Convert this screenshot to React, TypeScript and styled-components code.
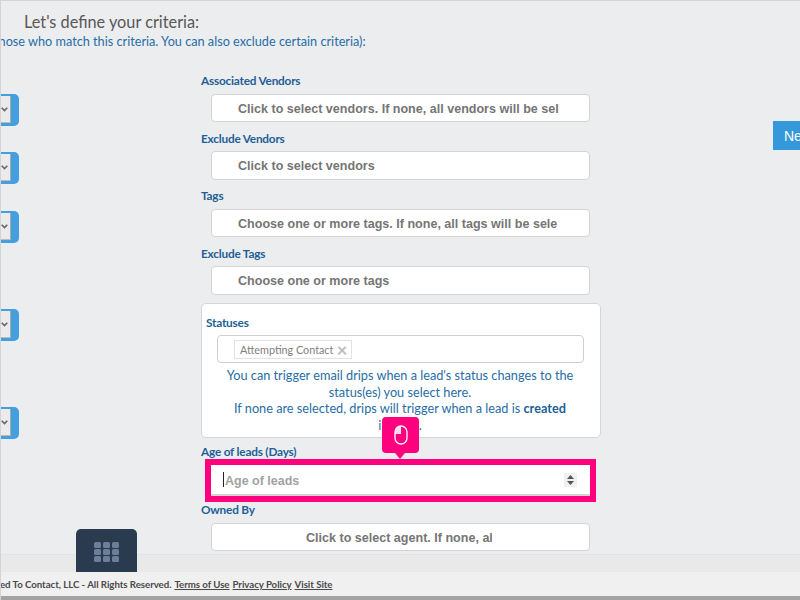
import React from "react";
import styled, { createGlobalStyle } from "styled-components";

const Global = createGlobalStyle`
  html, body { margin: 0; padding: 0; background: #ecedef; }
  * { box-sizing: border-box; }
`;
const Page = styled.div`
  position: relative; width: 800px; height: 600px; overflow: hidden;
  display: flex; flex-direction: column;
  background: #ecedef; border-top: 1px solid #d4d4d6; border-left: 1px solid #d4d4d6;
  font-family: Lato, "Open Sans", sans-serif;
`;
const Main = styled.div`flex: 0 0 553px; height: 553px; overflow: hidden;`;
const Heading = styled.h2`margin: 11px 0 0 23px; font-size: 16.3px; line-height: 20px; font-weight: 400; color: #585858;`;
const SubHeading = styled.p`margin: -1px 0 0 -7px; font-size: 12.7px; line-height: 20px; color: #276da6; white-space: nowrap;`;
const Columns = styled.div`display: flex; align-items: flex-start; margin-top: 22px;`;
const Stubs = styled.div`flex: 0 0 200px; display: flex; flex-direction: column; padding-top: 21px;`;
const Stub = styled.div<{ $gap: number }>`
  margin-top: ${p => p.$gap}px; width: 18px; height: 32px;
  display: flex; background: #439fdf; border-radius: 0 5px 5px 0; padding: 2px 8px 3px 0;
`;
const StubSelect = styled.div`
  flex: 1; background: #ebebeb; border-right: 1px solid #a9a9a9; border-bottom: 1px solid #bbb;
  display: flex; align-items: center; justify-content: center; padding-right: 2px;
  svg { display: block; }
`;
const Form = styled.div`flex: 0 0 400px; display: flex; flex-direction: column;`;
const Label = styled.label`
  display: block; font-size: 11.8px; letter-spacing: -0.2px; line-height: 15px; font-weight: 700; color: #1e5f97;
  margin: 0; height: 15px; white-space: nowrap;
`;
const Field = styled.div<{ $center?: boolean }>`
  margin: 5.5px 0 8.5px 10px; width: 379px; height: 28.5px; flex: none;
  background: #fff; border: 1px solid #d4d4d4; border-radius: 4px;
  font-family: "Liberation Sans", Arial, sans-serif; font-size: 12.55px; font-weight: 700; color: #757575;
  display: flex; align-items: center; overflow: hidden; white-space: nowrap;
  padding: 3px 0 0 ${p => p.$center ? 94 : 26}px;
`;
const FieldText = styled.span<{ $w: number }>`display: block; width: ${p => p.$w}px; overflow: hidden; line-height: 23px;`;
const StatusCard = styled.div`
  height: 135px; background: #fff; border: 1px solid #d6d6d6; border-radius: 5px;
  padding: 11px 0 0 4px;
`;
const TagInput = styled.div`
  display: flex; align-items: flex-start;
  margin: 5px 0 0 11px; width: 367px; height: 28px; border: 1px solid #cfcfcf; border-radius: 4px;
  padding: 4px 0 0 16px; background: #fff;
`;
const Tag = styled.span`
  display: inline-flex; align-items: center; gap: 3px; height: 19px; padding: 0 4px 0 5px;
  border: 1px solid #e2e2e2; font-size: 10.8px; color: #808080; white-space: nowrap;
`;
const TagX = styled.span`color: #bdbdbd; font-size: 19px; line-height: 17px; font-weight: 700;`;
const Help = styled.div`
  margin: 4px 0 0 -5px; width: 398px; padding: 0 20px; text-align: center;
  font-size: 12.73px; line-height: 16.7px; color: #276da6;
  b { color: #1e5f97; }
`;
const AgeLabel = styled(Label)`margin-top: 6px;`;
const AgeField = styled.div`
  position: relative; margin: 6px 0 6px 10px; width: 379px; height: 31px; flex: none;
  background: #fff; border-bottom: 2px solid #d4d4d4;
  display: flex; align-items: center; padding: 0 13px 0 12px;
  font-family: "Liberation Sans", Arial, sans-serif; font-size: 12.5px; font-weight: 700; color: #a2a2a2;
`;
const Placeholder = styled.span`padding-top: 2px;`;
const Caret = styled.span`width: 1px; height: 15px; background: #222; margin-right: 1px;`;
const Spinner = styled.span`
  margin-left: auto; width: 13px; height: 14px; background: #f0f0f0;
  display: flex; align-items: center; justify-content: center;
  svg { display: block; }
`;
const Highlight = styled.div`
  position: absolute; left: -6px; right: -6px; top: -6px; bottom: -8px;
  border: 6px solid #ff007f; pointer-events: none;
`;
const Tip = styled.div`
  position: absolute; left: 171px; top: -48px; width: 37px; height: 36px; border-radius: 4px;
  background: #ff007f; display: flex; align-items: center; justify-content: center;
  &::after {
    content: ""; position: absolute; left: 13px; bottom: -6px;
    border: 5px solid transparent; border-bottom: 0; border-top: 6px solid #ff007f;
  }
  svg { display: block; }
`;
const NextButton = styled.button`
  flex: none; margin: 48px 0 0 172px; width: 60px; height: 29px; padding: 0 0 0 11px; border: 0;
  background: #3498db; color: #fff; text-align: left;
  font-family: "Liberation Sans", Arial, sans-serif; font-size: 14px;
`;
const Strip = styled.div`flex: 0 0 18px; background: #e9e9ea; border-top: 1px solid #e0e3e7;`;
const Footer = styled.footer`
  flex: 0 0 24px; background: #f0f0f0; display: flex; align-items: center; overflow: hidden;
  white-space: nowrap; font-size: 9.7px; letter-spacing: -0.05px; font-weight: 700; color: #4a4a4a; padding-bottom: 1px;
  a { color: inherit; text-decoration: underline; margin-left: 3px; }
`;
const FooterCopy = styled.span`display: block; margin-left: -1px;`;
const BottomBar = styled.div`flex: 0 0 4px; background: #a3a3a3;`;
const GridButton = styled.div`
  position: absolute; left: 75px; top: 528px; width: 61px; height: 43px;
  background: #2a3b4f; border-radius: 5px 5px 0 0;
  display: flex; align-items: center; justify-content: center; padding-top: 3px;
  svg { display: block; }
`;

const Chevron = () => (
  <svg width="7" height="5" viewBox="0 0 7 5"><path d="M.7.7l2.8 2.8L6.3.7" fill="none" stroke="#666" strokeWidth="1.6" /></svg>
);
const gaps = [0, 26, 27, 66, 66];
const cells = [0, 1, 2].flatMap(r => [0, 1, 2].map(c => [c * 9, r * 7]));

export default function App() {
  return (
    <Page>
      <Global />
      <Main>
        <Heading>Let's define your criteria:</Heading>
        <SubHeading>those who match this criteria. You can also exclude certain criteria):</SubHeading>
        <Columns>
          <Stubs>
            {gaps.map((g, i) => (
              <Stub key={i} $gap={g}><StubSelect><Chevron /></StubSelect></Stub>
            ))}
          </Stubs>
          <Form>
            <Label>Associated Vendors</Label>
            <Field><FieldText $w={321}>Click to select vendors. If none, all vendors will be selected</FieldText></Field>
            <Label>Exclude Vendors</Label>
            <Field><FieldText $w={321}>Click to select vendors</FieldText></Field>
            <Label>Tags</Label>
            <Field><FieldText $w={319}>Choose one or more tags. If none, all tags will be selected</FieldText></Field>
            <Label>Exclude Tags</Label>
            <Field><FieldText $w={321}>Choose one or more tags</FieldText></Field>
            <StatusCard>
              <Label>Statuses</Label>
              <TagInput><Tag>Attempting Contact <TagX>×</TagX></Tag></TagInput>
              <Help>
                You can trigger email drips when a lead's status changes to the status(es) you select here.<br />
                If none are selected, drips will trigger when a lead is <b>created</b> instead.
              </Help>
            </StatusCard>
            <AgeLabel>Age of leads (Days)</AgeLabel>
            <AgeField>
              <Caret /><Placeholder>Age of leads</Placeholder>
              <Spinner>
                <svg width="7" height="10" viewBox="0 0 7 10"><path d="M3.5 0L7 4H0zM3.5 10L0 6h7z" fill="#555" /></svg>
              </Spinner>
              <Highlight />
              <Tip>
                <svg width="14" height="20" viewBox="0 0 14 20" fill="none">
                  <rect x="1" y="1" width="12" height="18" rx="6" stroke="#fff" strokeWidth="1.3" />
                  <path d="M7 1a6 6 0 0 0-6 6v2h6z" fill="#fff" fillOpacity=".85" />
                </svg>
              </Tip>
            </AgeField>
            <Label>Owned By</Label>
            <Field $center><FieldText $w={186}>Click to select agent. If none, all agents</FieldText></Field>
          </Form>
          <NextButton>Next</NextButton>
        </Columns>
      </Main>
      <Strip />
      <Footer>
        <FooterCopy>ed To Contact, LLC - All Rights Reserved.</FooterCopy>
        <a>Terms of Use</a><a>Privacy Policy</a><a>Visit Site</a>
      </Footer>
      <BottomBar />
      <GridButton>
        <svg width="25" height="20" viewBox="0 0 25 20">
          {cells.map(([x, y], i) => <rect key={i} x={x} y={y} width="7" height="6" rx="1.5" fill="#6b7f99" />)}
        </svg>
      </GridButton>
    </Page>
  );
}
